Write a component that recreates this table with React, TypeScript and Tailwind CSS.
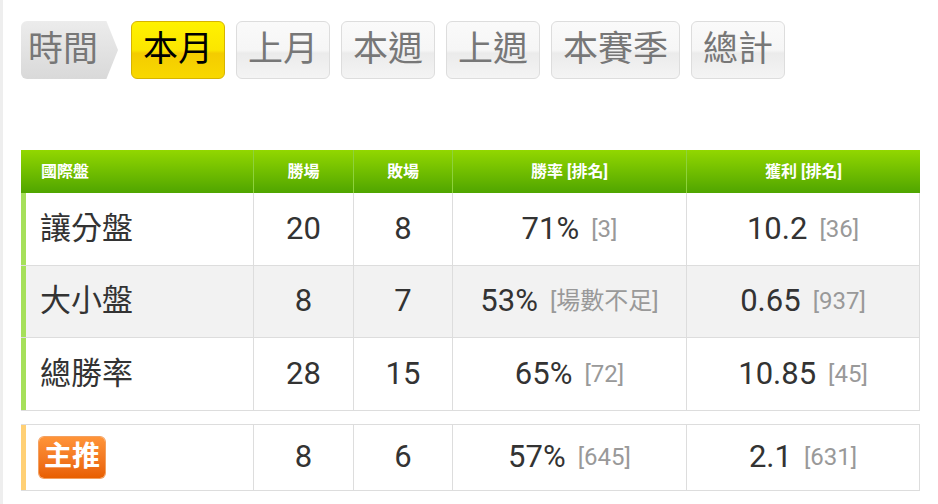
import React from 'react';

const tabs = ['本月', '上月', '本週', '上週', '本賽季', '總計'];

interface Row {
  label: string;
  win: string;
  lose: string;
  rate: string;
  rateRank: string;
  profit: string;
  profitRank: string;
}

const rows: Row[] = [
  { label: '讓分盤', win: '20', lose: '8', rate: '71%', rateRank: '[3]', profit: '10.2', profitRank: '[36]' },
  { label: '大小盤', win: '8', lose: '7', rate: '53%', rateRank: '[場數不足]', profit: '0.65', profitRank: '[937]' },
  { label: '總勝率', win: '28', lose: '15', rate: '65%', rateRank: '[72]', profit: '10.85', profitRank: '[45]' },
];

const cols = 'grid grid-cols-[232px_100px_99px_234px_234px]';

const Cells: React.FC<{ r: Omit<Row, 'label'> }> = ({ r }) => (
  <>
    <div className="flex items-center justify-center border-l border-[#dddddd]">{r.win}</div>
    <div className="flex items-center justify-center border-l border-[#dddddd]">{r.lose}</div>
    <div className="flex items-center justify-center border-l border-[#dddddd]">
      {r.rate}
      <span className="ml-3 text-[24px] text-[#999999]">{r.rateRank}</span>
    </div>
    <div className="flex items-center justify-center border-l border-r border-[#dddddd]">
      {r.profit}
      <span className="ml-3 text-[24px] text-[#999999]">{r.profitRank}</span>
    </div>
  </>
);

export default function App() {
  return (
    <div className="min-h-[504px] w-[938px] bg-white border-l-[3px] border-[#eeeeee] pl-[18px] pt-[21px] font-['Roboto','Noto_Sans_CJK_TC',sans-serif]">
      {/* tabs */}
      <div className="flex items-center gap-[11px]">
        <div className="h-[58px] w-[97px] mr-[2px] flex items-center pl-[7px] text-[35px] text-[#777777] bg-gradient-to-b from-[#ececec] to-[#d9d9d9] [clip-path:polygon(0_0,88%_0,100%_50%,88%_100%,0_100%)] rounded-l-md">
          時間
        </div>
        {tabs.map((t, i) => (
          <div
            key={t}
            className={
              i === 0
                ? 'h-[58px] px-[11px] flex items-center rounded-md border border-[#d6b400] text-[35px] text-black bg-[linear-gradient(#fff200_0%,#fbe600_50%,#f4cc00_56%,#f8d800_100%)]'
                : 'h-[58px] px-[11px] flex items-center rounded-md border border-[#dddddd] text-[35px] text-[#777777] bg-[linear-gradient(#fafafa_0%,#f6f6f6_50%,#ebebeb_56%,#f4f4f4_100%)]'
            }
          >
            {t}
          </div>
        ))}
      </div>

      {/* main table */}
      <div className="mt-[71px] w-[899px]">
        <div className={`${cols} h-[43px] text-[16px] font-bold text-white bg-gradient-to-b from-[#92d700] to-[#4fa500]`}>
          <div className="flex items-center pl-[20px]">國際盤</div>
          <div className="flex items-center justify-center border-l border-[#8ed23c]">勝場</div>
          <div className="flex items-center justify-center border-l border-[#8ed23c]">敗場</div>
          <div className="flex items-center justify-center border-l border-[#8ed23c]">勝率 [排名]</div>
          <div className="flex items-center justify-center border-l border-[#8ed23c]">獲利 [排名]</div>
        </div>
        {rows.map((r, i) => (
          <div
            key={r.label}
            className={`${cols} h-[72.5px] text-[31px] text-[#333333] border-b border-[#dddddd] ${i === 1 ? 'bg-[#f2f2f2]' : 'bg-white'}`}
          >
            <div className="flex items-center border-l-[5px] border-[#a6e05a] pl-[14px]">{r.label}</div>
            <Cells r={r} />
          </div>
        ))}

        {/* 主推 row */}
        <div className={`${cols} mt-[13px] h-[67px] text-[31px] text-[#333333] border-y border-[#dddddd] bg-white`}>
          <div className="flex items-center border-l-[5px] border-[#ffd075] pl-[13px]">
            <span className="h-[41px] px-[5px] flex items-center rounded-[5px] text-[28px] font-bold text-white bg-gradient-to-b from-[#ff9438] to-[#e85f00] shadow-[0_0_0_1px_#f3a060]">
              主推
            </span>
          </div>
          <Cells r={{ win: '8', lose: '6', rate: '57%', rateRank: '[645]', profit: '2.1', profitRank: '[631]' }} />
        </div>
      </div>
    </div>
  );
}
